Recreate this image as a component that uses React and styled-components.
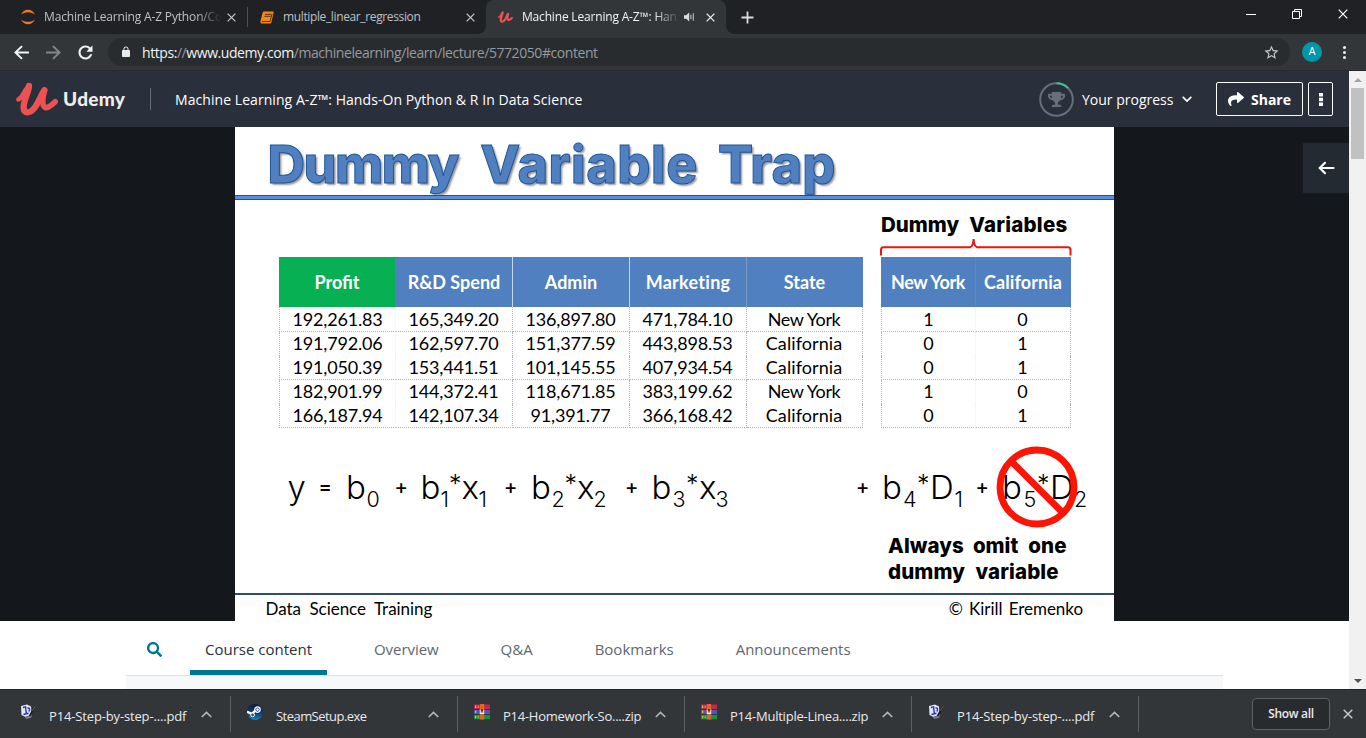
import React from "react";
import styled, { createGlobalStyle, css } from "styled-components";
import { FaTrophy, FaShare, FaSearch } from "react-icons/fa";

const ui = `"Open Sans", "Noto Sans", sans-serif`;
const table = `Lato, "Open Sans", sans-serif`;
const geo = `Inter, Lato, sans-serif`;

const Global = createGlobalStyle`
  * { box-sizing: border-box; }
  body { margin: 0; overflow: hidden; background: #fff; font-family: ${ui}; }
  svg { display: block; flex: none; }
`;

const Window = styled.div`
  display: flex;
  flex-direction: column;
  width: 1366px;
  height: 738px;
  overflow: hidden;
`;

/* ---------- browser tab strip ---------- */
const TabStrip = styled.div`
  display: flex;
  height: 34px;
  padding-left: 8px;
  background: #202124;
`;

const BrowserTab = styled.div`
  position: relative;
  display: flex;
  align-items: center;
  width: ${(p) => p.$w}px;
  padding: 0 11px 0 12px;
  font-size: 12px;
  letter-spacing: ${(p) => p.$ls}px;
  color: ${(p) => (p.$active ? "#f1f3f4" : "#bdc1c6")};
  ${(p) =>
    p.$active &&
    css`
      background: #323639;
      border-radius: 8px 8px 0 0;
      &::before,
      &::after {
        content: "";
        position: absolute;
        bottom: 0;
        width: 8px;
        height: 8px;
      }
      &::before {
        left: -8px;
        background: radial-gradient(circle at 0 0, transparent 7.5px, #323639 8px);
      }
      &::after {
        right: -8px;
        background: radial-gradient(circle at 100% 0, transparent 7.5px, #323639 8px);
      }
    `}
`;

const TabLabel = styled.span`
  flex: 1;
  margin-left: ${(p) => p.$gap}px;
  white-space: nowrap;
  line-height: 20px;
  ${(p) =>
    p.$fade &&
    css`
      mask-image: linear-gradient(to right, #000 ${p.$fade}px, transparent ${p.$fade + 26}px);
    `}
`;

const TabIcons = styled.div`
  display: flex;
  align-items: center;
  gap: 11px;
`;

const TabDivider = styled.div`
  width: 1px;
  height: 20px;
  margin: 7px 0;
  background: #4c4e51;
`;

const NewTab = styled.div`
  display: flex;
  align-items: center;
  margin-left: 15px;
`;

const WindowControls = styled.div`
  display: flex;
  gap: 36px;
  margin-left: auto;
  padding: 9px 18px 0 0;
`;

/* ---------- browser toolbar ---------- */
const Toolbar = styled.div`
  display: flex;
  align-items: center;
  height: 37px;
  padding: 0 11px;
  background: #323639;
  border-bottom: 1px solid #28292c;
`;

const NavIcons = styled.div`
  display: flex;
  gap: 11px;
  width: 97px;
`;

const Omnibox = styled.div`
  display: flex;
  align-items: center;
  width: 1182px;
  height: 28px;
  padding: 0 10px 0 12px;
  border-radius: 14px;
  background: #282c2f;
  color: #969a9e;
  font-size: 14px;
  line-height: 20px;
  letter-spacing: -0.43px;
  white-space: nowrap;
`;

const Url = styled.span`
  flex: 1;
  margin-left: 10px;
  padding-top: 1px;
`;

const Host = styled.span`
  color: #f1f3f4;
`;

const Avatar = styled.div`
  width: 20px;
  height: 20px;
  margin: 0 21px 0 12px;
  border-radius: 50%;
  background: #0097a7;
  color: #fff;
  font: 11px/20px Roboto, sans-serif;
  text-align: center;
`;

const KebabDots = styled.div`
  width: 3px;
  height: 3px;
  border-radius: 50%;
  background: #f1f3f4;
  box-shadow: 0 -5px #f1f3f4, 0 5px #f1f3f4;
`;

/* ---------- page ---------- */
const Viewport = styled.div`
  display: flex;
  height: 618px;
`;

const Page = styled.div`
  width: 1349px;
  overflow: hidden;
`;

const Scrollbar = styled.div`
  display: flex;
  flex-direction: column;
  align-items: center;
  width: 17px;
  background: #f1f1f1;
`;

const ScrollArrow = styled.div`
  display: flex;
  align-items: center;
  justify-content: center;
  height: 17px;
`;

const ScrollThumb = styled.div`
  width: 13px;
  height: 71px;
  margin-bottom: auto;
  background: #c1c1c1;
`;

const CourseHeader = styled.header`
  display: flex;
  align-items: center;
  height: 56px;
  padding: 0 16px;
  background: #2a2f3c;
  color: #fff;
  font-size: 14px;
  line-height: 20px;
`;

const Brand = styled.div`
  display: flex;
  align-items: center;
  width: 134px;
`;

const Wordmark = styled.span`
  margin-left: 5px;
  font: 900 19px/24px ${table};
  letter-spacing: 0.3px;
  color: #f0eee8;
`;

const HeaderDivider = styled.div`
  width: 1px;
  height: 22px;
  margin-right: 24px;
  background: #686f7a;
`;

const CourseTitle = styled.span`
  padding-top: 2px;
  letter-spacing: 0.06px;
`;

const Progress = styled.div`
  display: flex;
  align-items: center;
  margin-left: auto;
`;

const ProgressRing = styled.div`
  display: grid;
  place-items: center;
  margin-right: 8px;
  color: #686f7a;
  > svg {
    grid-area: 1 / 1;
  }
`;

const ProgressLabel = styled.span`
  width: 100px;
  padding-top: 2px;
`;

const HeaderButton = styled.div`
  display: flex;
  align-items: center;
  justify-content: center;
  gap: 7px;
  width: ${(p) => p.$w}px;
  height: 34px;
  margin-left: ${(p) => p.$ml}px;
  border: 1px solid #fff;
  border-radius: 2px;
  font-weight: 700;
`;

const ButtonText = styled.span`
  padding-top: 1px;
`;

const Stage = styled.section`
  display: flex;
  height: 494px;
  padding-left: 235px;
  background: #14171c;
`;

const SidebarToggle = styled.div`
  display: flex;
  align-items: center;
  justify-content: center;
  width: 46px;
  height: 50px;
  margin: 16px 0 0 auto;
  background: #232a31;
`;

/* ---------- lecture slide ---------- */
const Slide = styled.div`
  position: relative;
  display: flex;
  flex-direction: column;
  width: 879px;
  background: #fff;
  color: #000;
`;

const SlideTitle = styled.h1`
  display: flex;
  height: 68px;
  margin: 0;
  padding: 7px 0 0 32.5px;
  font: 800 52px/62px ${geo};
  color: #5180c1;
  -webkit-text-stroke: 1px #1f5597;
  text-shadow: 2px 2px 2px rgba(60, 50, 50, 0.5);
`;

const Word = styled.span`
  margin-left: ${(p) => p.$ml || 0}px;
  letter-spacing: ${(p) => p.$ls || 0}px;
`;

const TitleRule = styled.div`
  height: 5px;
  background: #5a8ddb;
  border: solid #27508a;
  border-width: 1px 0;
`;

const Tables = styled.div`
  display: flex;
  align-items: flex-end;
  gap: 18px;
  height: 228px;
  padding-left: 44px;
`;

const DummyGroup = styled.div`
  width: 190px;
`;

const GroupLabel = styled.div`
  display: flex;
  height: 26px;
  font: 800 20.5px/26px ${geo};
  letter-spacing: 0.2px;
`;

const BraceBox = styled.div`
  height: 19px;
  margin-left: -1px;
`;

const Grid = styled.div`
  display: grid;
  grid-template-columns: ${(p) => p.$cols};
  grid-template-rows: 50px 25px repeat(4, 24px);
  font: 18px/24px ${table};
  text-align: center;
  white-space: nowrap;
`;

const HeadCell = styled.div`
  line-height: 50px;
  font-weight: 700;
  letter-spacing: ${(p) => p.$ls || 0}px;
  color: #fff;
  background: ${(p) => (p.$green ? "#08b054" : "#5180c0")};
  border-right: 1px solid ${(p) => p.$edge};
`;

const Cell = styled.div`
  padding-right: ${(p) => (p.$first ? 0 : 1)}px;
  line-height: ${(p) => (p.$top ? 24 : 22)}px;
  letter-spacing: ${(p) => p.$ls}px;
  border: 0 dotted #b4b4b4;
  border-right-width: 1px;
  border-right-color: ${(p) => (p.$first ? "#efefef" : "#b4b4b4")};
  border-left-width: ${(p) => (p.$first ? 1 : 0)}px;
  border-bottom-width: ${(p) => (p.$ruled ? 1 : 0)}px;
`;

const Formula = styled.div`
  height: 40px;
  margin-top: 39px;
  padding-left: 52.5px;
  font: 300 33px/40px ${geo};
  white-space: nowrap;
`;

const Sym = styled.span`
  display: inline-block;
  width: ${(p) => p.$w}px;
  line-height: 1px;
`;

const Sub = styled(Sym)`
  font-size: 21.5px;
  vertical-align: -8px;
`;

const Star = styled(Sym)`
  font-size: 25px;
  vertical-align: 6px;
`;

const Op = styled(Sym)`
  font-size: 20px;
  font-weight: 500;
  vertical-align: 5px;
`;

const ProhibitSign = styled.div`
  position: absolute;
  left: 761px;
  top: 319px;
`;

const Advice = styled.div`
  margin: 26px 0 0 653px;
  font: 800 20.5px/26px ${geo};
  letter-spacing: 0.12px;
`;

const AdviceLine = styled.div`
  display: flex;
`;

const SlideFooter = styled.div`
  display: flex;
  justify-content: space-between;
  height: 28px;
  margin-top: auto;
  padding: 0 31px 0 30.5px;
  border-top: 2px solid #2f4a73;
  font: 17px/28px ${table};
  letter-spacing: -0.05px;
`;

const FooterText = styled.span`
  word-spacing: ${(p) => p.$ws}px;
`;

/* ---------- course tabs ---------- */
const CourseTabs = styled.nav`
  display: flex;
  align-items: center;
  width: 1097px;
  height: 55px;
  margin-left: 126px;
  padding-left: 21px;
  border-bottom: 1px solid #dedfe0;
`;

const CourseTab = styled.div`
  height: 54px;
  margin-right: 32px;
  padding: 0 15px;
  border-bottom: 5px solid ${(p) => (p.$active ? "#007791" : "transparent")};
  color: ${(p) => (p.$active ? "#29303b" : "#5f6671")};
  font-size: 15px;
  line-height: 56px;
  letter-spacing: ${(p) => p.$ls || 0}px;
`;

const SearchSlot = styled.div`
  width: 43px;
  padding-top: 3px;
  color: #007791;
`;

const Panel = styled.div`
  width: 1097px;
  height: 14px;
  margin-left: 126px;
  background: #f7f8fa;
`;

/* ---------- downloads ---------- */
const Downloads = styled.footer`
  display: flex;
  align-items: center;
  height: 49px;
  padding: 0 13px 0 4px;
  border-top: 1px solid #232528;
  background: #323639;
`;

const Download = styled.div`
  display: flex;
  align-items: center;
  width: 227px;
  height: 36px;
  padding: 0 18px 0 16px;
  border-right: 1px solid #5f6265;
  color: #e8eaed;
`;

const FileName = styled.span`
  flex: 1;
  margin: 4px 0 0 13px;
  font-size: 13px;
  line-height: 18px;
  letter-spacing: ${(p) => p.$ls}px;
  white-space: nowrap;
`;

const FileIcon = styled.div`
  margin-top: -4px;
`;

const ShowAll = styled.div`
  width: 78px;
  height: 32px;
  margin: 0 13px 0 auto;
  border: 1px solid #5f6368;
  border-radius: 4px;
  background: #292a2d;
  color: #e8eaed;
  font-size: 12px;
  font-weight: 600;
  line-height: 29px;
  letter-spacing: -0.3px;
  text-align: center;
`;

/* ---------- icons ---------- */
const Cross = ({ size = 9, color = "#bdc1c6", w = 1.5 }) => (
  <svg width={size} height={size} viewBox="0 0 10 10">
    <path d="M.7.7l8.6 8.6M9.3.7L.7 9.3" stroke={color} strokeWidth={w} fill="none" />
  </svg>
);

const Glyph = ({ d, size, color = "#f1f3f4", flip }) => (
  <svg width={size} height={size} viewBox="0 0 24 24">
    <path d={d} fill={color} transform={flip ? "matrix(-1 0 0 1 24 0)" : undefined} />
  </svg>
);

const ARROW = "M20.5 10.8H7.83l5.59-5.4L11.8 3.9 3.5 12l8.3 8.1 1.6-1.5-5.57-5.4H20.5z";
const RELOAD =
  "M17.65 6.35C16.2 4.9 14.21 4 12 4c-4.42 0-7.99 3.58-7.99 8s3.57 8 7.99 8c3.73 0 6.84-2.55 7.73-6h-2.5c-.82 2-2.8 3.6-5.23 3.6-3.1 0-5.6-2.5-5.6-5.6s2.5-5.6 5.6-5.6c1.5 0 2.9.6 3.9 1.6L13 11h7V4z";
const LOCK =
  "M18 8h-1V6c0-2.76-2.24-5-5-5S7 3.24 7 6v2H6c-1.1 0-2 .9-2 2v10c0 1.1.9 2 2 2h12c1.1 0 2-.9 2-2V10c0-1.1-.9-2-2-2zm-2.9 0H8.9V6c0-1.71 1.39-3.1 3.1-3.1 1.71 0 3.1 1.39 3.1 3.1v2z";
const STAR =
  "M22 9.24l-7.19-.62L12 2 9.19 8.63 2 9.24l5.46 4.73L5.82 21 12 17.27 18.18 21l-1.63-7.03L22 9.24zM12 15.4l-3.76 2.27 1-4.28-3.32-2.88 4.38-.38L12 6.1l1.71 4.04 4.38.38-3.32 2.88 1 4.28L12 15.4z";

const JupyterIcon = () => (
  <svg width="16" height="16" viewBox="0 0 16 16" fill="#f37726">
    <path d="M1.2 5.6C2.4 2.6 5 .8 8 .8s5.6 1.8 6.800 4.800C13.200 4.100 10.800 3.200 8 3.200S2.800 4.100 1.200 5.600z" />
    <path d="M1.200 10.400C2.400 13.400 5 15.200 8 15.200s5.600-1.800 6.800-4.800C13.200 11.900 10.800 12.800 8 12.800s-5.200-.9-6.800-2.400z" />
  </svg>
);

const NotebookIcon = () => (
  <svg width="14" height="13" viewBox="0 0 14 13">
    <path d="M4 .5h9q.8 0 .6.9L11.400 11.500q-.3 1-1.300 1H1.800Q0 12.300.4 10.400L2.600 1.800Q3 .5 4 .5z" fill="#f88613" />
    <path d="M5 3.300h6M4.400 5.300h6M1.900 10.500h8.200L12 2.800" stroke="#202124" strokeWidth=".8" fill="none" />
  </svg>
);

const UdemyMark = ({ width, height }) => (
  <svg width={width} height={height} viewBox="0 0 42 34" fill="none" stroke="#ec5252" strokeLinecap="round" strokeLinejoin="round">
    <path d="M2.500 17.400C6.500 16 8.500 8 12 5" strokeWidth="4.600" />
    <path d="M13 3.800C13 10 7.600 18 7.600 25C7.600 32 13.500 31.600 18 26.500C22.500 21 24.500 14 28.300 8.200" strokeWidth="6.300" />
    <path d="M28.600 8.200C27 14 25.800 19 27.400 23.500C29.200 28 34.500 24.500 39.200 19.800" strokeWidth="5.600" />
  </svg>
);

const SpeakerIcon = () => (
  <svg width="11" height="10" viewBox="0 0 11 10">
    <path d="M0 3.200h2.200L5.200.6v8.800L2.200 6.800H0z" fill="#dadce0" />
    <path d="M6.900 2.800v4.400M9.300 1.200v7.600" stroke="#bdc1c6" strokeWidth="1.100" />
  </svg>
);

const Ring = () => (
  <svg width="35" height="35" viewBox="0 0 35 35" fill="none" strokeWidth="2">
    <circle cx="17.500" cy="17.500" r="16.300" stroke="#686f7a" />
    <path d="M17.500 1.200A16.300 16.300 0 0 1 29 6" stroke="#3fc08c" />
  </svg>
);

const MoreDots = () => (
  <svg width="4" height="13" viewBox="0 0 4 13" fill="#fff">
    <path d="M0 0h4v3.500H0zM0 4.700h4v3.500H0zM0 9.400h4v3.500H0z" />
  </svg>
);

const Chevron = ({ up, w, h, color, sw }) => (
  <svg width={w} height={h} viewBox="0 0 10 6" fill="none">
    <path d={up ? "M.7 5.300L5 1l4.300 4.300" : "M.7.8L5 5.100 9.300.8"} stroke={color} strokeWidth={sw} />
  </svg>
);

const LeftArrow = () => (
  <svg width="17" height="14" viewBox="0 0 17 14" fill="none" stroke="#fff" strokeWidth="2.200" strokeLinecap="round">
    <path d="M15.500 7H2M7 1.800L1.800 7 7 12.200" />
  </svg>
);

const Brace = () => (
  <svg width="193" height="18" viewBox="0 0 193 18" fill="none" stroke="#e9170f" strokeWidth="2">
    <path d="M1 17.500V12q0-2.800 2-2.800h87q3-.4 3.600-8.200q.6 7.800 3.600 8.200h91q2.300 0 2.300 2.800v5.500" />
  </svg>
);

const DocIcon = () => (
  <svg width="16" height="16" viewBox="0 0 16 16">
    <path d="M1 2l6-1.500 4 2 .5 8L5.500 13 1.500 11z" fill="#dfe3f2" />
    <path d="M5 13l7-2-1 3-5 1z" fill="#777b80" />
    <path d="M3 3.500l2.500-.6.8 6.500M3.500 10.500l5-1.200M7.500 4c2.500-.5 2.500 2.500 1.200 3.500" stroke="#2c32c8" strokeWidth="1.400" fill="none" />
    <path d="M15 2.500L9.500 12" stroke="#17191b" strokeWidth="1.600" />
    <path d="M15.200 2.200L12.500 6.800" stroke="#8a8a4a" strokeWidth=".8" />
  </svg>
);

const SteamIcon = () => (
  <svg width="16" height="16" viewBox="0 0 16 16">
    <defs>
      <linearGradient id="steam" x1="0" y1="0" x2="0" y2="1">
        <stop offset="0" stopColor="#101c3c" />
        <stop offset=".6" stopColor="#123f74" />
        <stop offset="1" stopColor="#1a86bd" />
      </linearGradient>
    </defs>
    <circle cx="8" cy="8" r="8" fill="url(#steam)" />
    <path d="M0 7.800l5 2.100 4-4" stroke="#fff" strokeWidth="2.400" fill="none" />
    <circle cx="10.500" cy="5.600" r="2.700" fill="#153a6b" stroke="#fff" strokeWidth="1.200" />
    <circle cx="10.500" cy="5.600" r="1.300" fill="#fff" />
    <circle cx="5.600" cy="10.900" r="1.900" fill="#174f86" stroke="#fff" strokeWidth="1" />
  </svg>
);

const RarIcon = () => (
  <svg width="16" height="16" viewBox="0 0 16 16">
    <path d="M0 .5h16v4.600H0z" fill="#c92350" />
    <path d="M0 5.600h16v4.600H0z" fill="#5056b4" />
    <path d="M0 10.700h16v4.600H0z" fill="#189044" />
    <path d="M0 5.100h16v.5H0zM0 10.200h16v.5H0z" fill="#26242c" />
    <path d="M1.200 1.500h1v2.500h-1zM1.200 6.600h1v2.500h-1zM1.200 11.700h1v2.500h-1zM3.800 1.500h.7v2.500h-.7zM3.800 11.700h.7v2.500h-.7z" fill="#f0d63c" />
    <path d="M5.800 0h4.400v15.500H5.800z" fill="#e0671a" />
    <path d="M5 5.200h6v5.600H5z" fill="#5a2c26" />
    <path d="M6.200 5.500v4.300h3.600V5.500M8 7.500v2.200" stroke="#fff" strokeWidth="1.100" fill="none" />
  </svg>
);

/* ---------- data ---------- */
const mainHead = [
  { t: "Profit", green: true, edge: "#55915f" },
  { t: "R&D Spend", edge: "#c7d6ec" },
  { t: "Admin", edge: "#c7d6ec" },
  { t: "Marketing", edge: "#7e9dc0", ls: 0.28 },
  { t: "State", edge: "#5180c0" },
];
const mainRows = [
  ["192,261.83", "165,349.20", "136,897.80", "471,784.10", "New York"],
  ["191,792.06", "162,597.70", "151,377.59", "443,898.53", "California"],
  ["191,050.39", "153,441.51", "101,145.55", "407,934.54", "California"],
  ["182,901.99", "144,372.41", "118,671.85", "383,199.62", "New York"],
  ["166,187.94", "142,107.34", "91,391.77", "366,168.42", "California"],
];
const dummyHead = [
  { t: "New York", edge: "#6287b9", ls: -0.37 },
  { t: "California", edge: "#5180c0", ls: 0.1 },
];
const dummyRows = [["1", "0"], ["0", "1"], ["0", "1"], ["1", "0"], ["0", "1"]];
const spacing = (t) => (t === "New York" ? -0.38 : t === "California" ? 0.09 : -0.17);

const DataTable = ({ cols, head, rows }) => (
  <Grid $cols={cols}>
    {head.map((h) => (
      <HeadCell key={h.t} $green={h.green} $edge={h.edge} $ls={h.ls}>{h.t}</HeadCell>
    ))}
    {rows.map((row, r) =>
      row.map((t, c) => (
        <Cell key={`${r}-${c}`} $ls={spacing(t)} $top={r === 0} $ruled={r % 2 === 0} $first={c === 0}>
          {t}
        </Cell>
      ))
    )}
  </Grid>
);

/* Each entry: [kind, glyph, distance to the next glyph] */
const formula = [
  ["v", "y", 31], ["o", "=", 27.5], ["v", "b", 20.5], ["s", "0", 28], ["o", "+", 26],
  ["v", "b", 20], ["s", "1", 8.5], ["a", "*", 12.5], ["v", "x", 17], ["s", "1", 25.5],
  ["o", "+", 27], ["v", "b", 20.5], ["s", "2", 13], ["a", "*", 12.5], ["v", "x", 16.5], ["s", "2", 31.5],
  ["o", "+", 26.5], ["v", "b", 21], ["s", "3", 13.5], ["a", "*", 13], ["v", "x", 16.5], ["s", "3", 140.5],
  ["o", "+", 26], ["v", "b", 21], ["s", "4", 14], ["a", "*", 13], ["v", "D", 24.5], ["s", "1", 21],
  ["o", "+", 26.5], ["v", "b", 21.5], ["s", "5", 13.5], ["a", "*", 13], ["v", "D", 24], ["s", "2", 14],
];
const kinds = { v: Sym, s: Sub, a: Star, o: Op };

const downloads = [
  { name: "P14-Step-by-step-....pdf", Icon: DocIcon, ls: -0.15 },
  { name: "SteamSetup.exe", Icon: SteamIcon, ls: -0.54 },
  { name: "P14-Homework-So....zip", Icon: RarIcon, ls: -0.25 },
  { name: "P14-Multiple-Linea....zip", Icon: RarIcon, ls: -0.23 },
  { name: "P14-Step-by-step-....pdf", Icon: DocIcon, ls: -0.15 },
];

const Browser = () => (
  <>
    <TabStrip>
      <BrowserTab $w={239} $ls={-0.16}>
        <JupyterIcon />
        <TabLabel $gap={8} $fade={152}>Machine Learning A-Z Python/Co</TabLabel>
        <Cross />
      </BrowserTab>
      <TabDivider />
      <BrowserTab $w={238} $ls={-0.37}>
        <NotebookIcon />
        <TabLabel $gap={9}>multiple_linear_regression</TabLabel>
        <Cross />
      </BrowserTab>
      <BrowserTab $w={240} $ls={-0.18} $active>
        <UdemyMark width={15} height={12} />
        <TabLabel $gap={9} $fade={132}>Machine Learning A-Z™: Han</TabLabel>
        <TabIcons>
          <SpeakerIcon />
          <Cross color="#e8eaed" />
        </TabIcons>
      </BrowserTab>
      <NewTab>
        <svg width="13" height="13" viewBox="0 0 13 13">
          <path d="M6.500.5v12M.5 6.500h12" stroke="#dadce0" strokeWidth="1.800" />
        </svg>
      </NewTab>
      <WindowControls>
        <svg width="10" height="10" viewBox="0 0 10 10"><path d="M0 5.500h10" stroke="#fff" /></svg>
        <svg width="10" height="10" viewBox="0 0 10 10" fill="none" stroke="#fff">
          <path d="M.5 2.500h7v7h-7zM2.500 2.500v-2h7v7h-2" />
        </svg>
        <Cross size={10} color="#fff" w={1.200} />
      </WindowControls>
    </TabStrip>
    <Toolbar>
      <NavIcons>
        <Glyph d={ARROW} size={21} />
        <Glyph d={ARROW} size={21} color="#84878a" flip />
        <Glyph d={RELOAD} size={21} />
      </NavIcons>
      <Omnibox>
        <Glyph d={LOCK} size={12} color="#e8eaed" />
        <Url><Host>https:</Host>//<Host>www.udemy.com</Host>/machinelearning/learn/lecture/5772050#content</Url>
        <Glyph d={STAR} size={17} color="#c4c7ca" />
      </Omnibox>
      <Avatar>A</Avatar>
      <KebabDots />
    </Toolbar>
  </>
);

const LectureSlide = () => (
  <Slide>
    <SlideTitle>
      <Word $ls={-1.5}>Dummy</Word>
      <Word $ls={0.48} $ml={22}>Variable</Word>
      <Word $ls={0.2} $ml={20}>Trap</Word>
    </SlideTitle>
    <TitleRule />
    <Tables>
      <DataTable cols="117px 117px 117px 117px 116px" head={mainHead} rows={mainRows} />
      <DummyGroup>
        <GroupLabel><Word>Dummy</Word><Word $ml={10} $ls={0.25}>Variables</Word></GroupLabel>
        <BraceBox><Brace /></BraceBox>
        <DataTable cols="95px 95px" head={dummyHead} rows={dummyRows} />
      </DummyGroup>
    </Tables>
    <Formula>
      {formula.map(([k, g, w], i) => {
        const Kind = kinds[k];
        return <Kind key={i} $w={w}>{g}</Kind>;
      })}
    </Formula>
    <Advice>
      <AdviceLine><Word $ls={0.1}>Always</Word><Word $ml={9}>omit</Word><Word $ml={10} $ls={0.1}>one</Word></AdviceLine>
      <AdviceLine><Word $ls={0.1}>dummy</Word><Word $ml={10.5} $ls={0.15}>variable</Word></AdviceLine>
    </Advice>
    <SlideFooter>
      <FooterText $ws={4.3}>Data Science Training</FooterText>
      <FooterText $ws={2}>© Kirill Eremenko</FooterText>
    </SlideFooter>
    <ProhibitSign>
      <svg width="82" height="82" viewBox="0 0 82 82" fill="none" stroke="#fb1505" strokeWidth="6.800">
        <circle cx="41" cy="41" r="37" />
        <path d="M15 15l52 52" />
      </svg>
    </ProhibitSign>
  </Slide>
);

export default function App() {
  return (
    <Window>
      <Global />
      <Browser />
      <Viewport>
        <Page>
          <CourseHeader>
            <Brand>
              <UdemyMark width={42} height={34} />
              <Wordmark>Udemy</Wordmark>
            </Brand>
            <HeaderDivider />
            <CourseTitle>Machine Learning A-Z™: Hands-On Python &amp; R In Data Science</CourseTitle>
            <Progress>
              <ProgressRing><Ring /><FaTrophy size={17} /></ProgressRing>
              <ProgressLabel>Your progress</ProgressLabel>
              <Chevron w={10} h={6} color="#fff" sw={1.700} />
            </Progress>
            <HeaderButton $w={87} $ml={24}><FaShare size={16} /><ButtonText>Share</ButtonText></HeaderButton>
            <HeaderButton $w={25} $ml={5}><MoreDots /></HeaderButton>
          </CourseHeader>
          <Stage>
            <LectureSlide />
            <SidebarToggle><LeftArrow /></SidebarToggle>
          </Stage>
          <CourseTabs>
            <SearchSlot><FaSearch size={15} /></SearchSlot>
            <CourseTab $active>Course content</CourseTab>
            <CourseTab $ls={-0.06}>Overview</CourseTab>
            <CourseTab>Q&amp;A</CourseTab>
            <CourseTab>Bookmarks</CourseTab>
            <CourseTab>Announcements</CourseTab>
          </CourseTabs>
          <Panel />
        </Page>
        <Scrollbar>
          <ScrollArrow><svg width="8" height="4" viewBox="0 0 8 4"><path d="M4 0l4 4H0z" fill="#a3a3a3" /></svg></ScrollArrow>
          <ScrollThumb />
          <ScrollArrow><svg width="8" height="4" viewBox="0 0 8 4"><path d="M4 4l4-4H0z" fill="#505050" /></svg></ScrollArrow>
        </Scrollbar>
      </Viewport>
      <Downloads>
        {downloads.map(({ name, Icon, ls }, i) => (
          <Download key={i}>
            <FileIcon><Icon /></FileIcon>
            <FileName $ls={ls}>{name}</FileName>
            <Chevron up w={11} h={7} color="#b4b7ba" sw={1.500} />
          </Download>
        ))}
        <ShowAll>Show all</ShowAll>
        <Cross size={10} color="#c4c7ca" />
      </Downloads>
    </Window>
  );
}
